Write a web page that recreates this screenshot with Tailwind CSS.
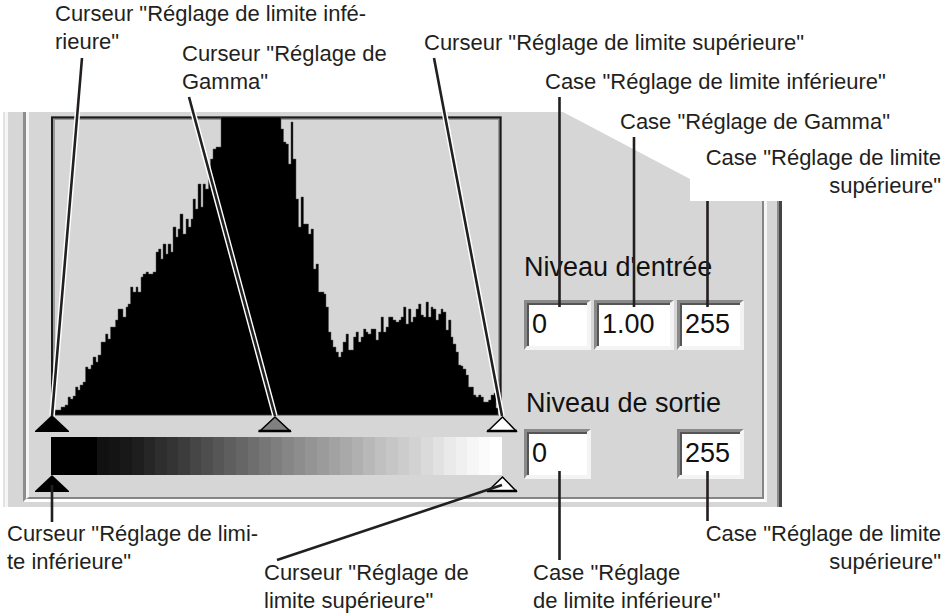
<!DOCTYPE html>
<html lang="fr">
  <head>
    <meta charset="UTF-8" />
    <meta name="viewport" content="width=device-width, initial-scale=1.0" />
    <title>Réglage des niveaux</title>
    <script src="https://cdn.jsdelivr.net/npm/@tailwindcss/browser@4"></script>
  </head>
  <body class="bg-white font-['Liberation_Sans',Arial,sans-serif] text-[#231f20]">
    <main class="relative min-h-screen w-full max-w-[945px] overflow-hidden pt-[112px] pl-[3px]">

      <!-- Dialog panel, cut away at the top right -->
      <section class="flex w-[779px] bg-[#d6d6d6] [clip-path:polygon(0_0,560px_0,687px_67px,687px_89px,100%_89px,100%_100%,0_100%)]">
        <div class="w-[5px] border-l-2 border-[#e2e2e2] bg-[#f5f5f5]"></div>
        <div class="mb-[5px] ml-[15px] w-[744px] border-r-3 border-b-3 border-l-3 border-r-[#f5f5f5] border-b-white border-l-[#8c8c8c]">
          <div class="flex border-r-2 border-b-2 border-l-3 border-r-[#858585] border-b-[#858585] border-l-[#f5f5f5] pt-1 pl-[22px]">

            <div class="w-[451px]">
              <svg class="block h-[299px] w-full" viewBox="51 116 451 299" role="img" aria-label="Histogramme">
                <path fill="none" stroke="#999" stroke-width="4" d="M53 415V118H500V415" />
                <path fill="none" stroke="#1c1c1c" stroke-width="2" d="M52 415V117.500H500.500V415" />
                <path fill="#000" stroke="#555" stroke-width=".5" d="M55 415V410H61V407H65V405H68V397H70.500V399H73V396H75.500V387H78V390H80V385H83V382H85.500V367H88V369H91V365H93V357H96V362H98V355H101V342H105.500V334H108V339H110.500V327H115.500V320H118V309H123V317H126V307H128V304H130.500V287H133V292H136V287H138V292H141V277H143V274H146V272H148.500V274H153V272H156V252H158.500V249H161V259H163V244H166V254H168V244H171V252H173V227H176V237H178V229H180V214H183V234H186V219H188.500V227H191V219H193V199H195.500V209H198V184H201V207H203V184H205.500V189H208.500V178H210.500V159H213V149H216V147H221V117H281V129H283.500V142H286V144H288.500V164H291V122H293V159H296V199H298.500V227H301V197H303.500V224H308.500V234H311V229H313.500V269H316V264H318.500V292H324V294H326V307H328.500V332H331V340H333V347H336V352H338.500V357H341V352H343V342H346V334H348.500V350H353.500V337H356V332H358.500V342H361V337H363.500V329H366V332H368V334H371V329H376V340H378.500V332H381V317H383.500V332H386V327H388.500V317H393V320H396V322H399V320H401V317H403.500V307H406V324H408.500V309H411V322H413V317H416V309H418.500V304H421V315H423.500V317H426V302H428.500V317H431V307H433V309H436V320H438.500V314H441V309H443V312H446V330H448.500V320H451V337H453V344H456V352H458.500V365H461V366H463V369H466V375H468.500V387H473.500V395H476V397H478.500V395H481V397H483.500V402H488.500V400H491V395H494V393H496V408H498V415Z" />
              </svg>

              <!-- Input sliders -->
              <div class="relative h-[22px] border-t border-[#8c8c8c]">
                <svg class="block h-[21px] w-full overflow-visible" viewBox="51 416 451 21" aria-hidden="true">
                  <path fill="#000" d="M52 415L69 431V432H35V431Z" />
                  <path fill="#808080" stroke="#000" stroke-width="1.500" d="M275 417L290 431H260Z" />
                  <path fill="#fff" stroke="#000" stroke-width="1.500" d="M502.500 417L516 431H488Z" />
                  <path stroke="#000" stroke-width="2.500" d="M258.500 431H291M487 431H517" />
                </svg>
                <input type="range" min="0" max="255" value="0" aria-labelledby="c-in-low" class="absolute top-0 left-0 h-full w-1/3 opacity-0" />
                <input type="range" min="0" max="2" step="0.01" value="1" aria-labelledby="c-gamma" class="absolute top-0 left-1/3 h-full w-1/3 opacity-0" />
                <input type="range" min="0" max="255" value="255" aria-labelledby="c-in-high" class="absolute top-0 right-0 h-full w-1/3 opacity-0" />
              </div>

              <div id="ramp" class="flex h-[38px]"></div>

              <!-- Output sliders -->
              <div class="relative h-[22px]">
                <svg class="block h-[22px] w-full overflow-visible" viewBox="51 475 451 22" aria-hidden="true">
                  <path fill="#000" d="M52 475L69 491V492H35V491Z" />
                  <path fill="#fff" stroke="#000" stroke-width="1.500" d="M502.500 477L516 491H488Z" />
                  <path stroke="#000" stroke-width="2.500" d="M487 491H517" />
                </svg>
                <input type="range" min="0" max="255" value="0" aria-labelledby="c-out-low" class="absolute top-0 left-0 h-full w-1/2 opacity-0" />
                <input type="range" min="0" max="255" value="255" aria-labelledby="c-out-high" class="absolute top-0 right-0 h-full w-1/2 opacity-0" />
              </div>
            </div>

            <div class="ml-[22px] pt-[135px] text-[27px] leading-8 text-[#111]">
              <h2 id="in-title">Niveau d'entrée</h2>
              <div class="mt-[17px] flex gap-[3px]" role="group" aria-labelledby="in-title">
                <input type="text" value="0" aria-labelledby="b-in-low" class="h-[50px] w-[67px] border-t-3 border-r-4 border-b-4 border-l-3 border-t-[#8a8a8a] border-r-[#f4f4f4] border-b-[#f4f4f4] border-l-[#8a8a8a] bg-white pl-[5px] shadow-[inset_2px_2px_0_#555]" />
                <input type="text" value="1.00" aria-labelledby="b-gamma" class="h-[50px] w-[80px] border-t-3 border-r-4 border-b-4 border-l-3 border-t-[#8a8a8a] border-r-[#f4f4f4] border-b-[#f4f4f4] border-l-[#8a8a8a] bg-white pl-[5px] shadow-[inset_2px_2px_0_#555]" />
                <input type="text" value="255" aria-labelledby="b-in-high" class="h-[50px] w-[67px] border-t-3 border-r-4 border-b-4 border-l-3 border-t-[#8a8a8a] border-r-[#f4f4f4] border-b-[#f4f4f4] border-l-[#8a8a8a] bg-white pl-[5px] shadow-[inset_2px_2px_0_#555]" />
              </div>
              <h2 id="out-title" class="mt-[37px] pl-[2px]">Niveau de sortie</h2>
              <div class="mt-[10px] flex justify-between" role="group" aria-labelledby="out-title">
                <input type="text" value="0" aria-labelledby="b-out-low" class="h-[50px] w-[67px] border-t-3 border-r-4 border-b-4 border-l-3 border-t-[#8a8a8a] border-r-[#f4f4f4] border-b-[#f4f4f4] border-l-[#8a8a8a] bg-white pl-[5px] shadow-[inset_2px_2px_0_#555]" />
                <input type="text" value="255" aria-labelledby="b-out-high" class="h-[50px] w-[67px] border-t-3 border-r-4 border-b-4 border-l-3 border-t-[#8a8a8a] border-r-[#f4f4f4] border-b-[#f4f4f4] border-l-[#8a8a8a] bg-white pl-[5px] shadow-[inset_2px_2px_0_#555]" />
              </div>
            </div>
          </div>
        </div>
        <div class="ml-auto w-[5px] border-r-3 border-[#444] bg-[#8c8c8c]"></div>
      </section>

      <!-- Leader lines -->
      <svg class="pointer-events-none absolute top-0 left-0 h-[615px] w-[945px]" viewBox="0 0 945 615" fill="none" aria-hidden="true">
        <path stroke="#fff" stroke-width="5.500" d="M77.500 112L52 416M193 112L275 416M444.300 112L502 416" />
        <path stroke="#231f20" stroke-width="2.600" d="M82 58L52 416M189 97L275 416M434 58L502 416M559.500 97V307M634 137V307M707.500 201V307M52 485V522M502 485L277 560M559.500 471V560M707.500 471V521" />
      </svg>

      <!-- Callouts -->
      <div class="text-[22px] leading-7 whitespace-nowrap">
        <p id="c-in-low" class="absolute top-0 left-[55px]">Curseur "Réglage de limite infé-<br />rieure"</p>
        <p id="c-gamma" class="absolute top-[40px] left-[182px]">Curseur "Réglage de<br />Gamma"</p>
        <p id="c-in-high" class="absolute top-[29px] left-[424px]">Curseur "Réglage de limite supérieure"</p>
        <p id="b-in-low" class="absolute top-[68px] left-[545px]">Case "Réglage de limite inférieure"</p>
        <p id="b-gamma" class="absolute top-[108px] left-[620px]">Case "Réglage de Gamma"</p>
        <p id="b-in-high" class="absolute top-[144px] right-[4px] text-right">Case "Réglage de limite<br />supérieure"</p>
        <p id="c-out-low" class="absolute top-[520px] left-[7px]">Curseur "Réglage de limi-<br />te inférieure"</p>
        <p id="c-out-high" class="absolute top-[559px] left-[264px]">Curseur "Réglage de<br />limite supérieure"</p>
        <p id="b-out-low" class="absolute top-[559px] left-[533px]">Case "Réglage<br />de limite inférieure"</p>
        <p id="b-out-high" class="absolute top-[520px] right-[4px] text-right">Case "Réglage de limite<br />supérieure"</p>
      </div>
    </main>

    <script>
      // grey levels of the output ramp, one per band
      const levels = [0, 0, 0, 0, 17, 20, 24, 30, 38, 46, 52, 60, 70, 78, 86, 94, 102, 110, 118, 126, 134, 141, 148, 155, 162, 169, 176, 184, 192, 198, 204, 210, 218, 226, 234, 240, 246, 251, 255];
      const ramp = document.getElementById('ramp');

      levels.forEach((v) => {
        const band = document.createElement('div');
        band.className = 'flex-1';
        band.style.backgroundColor = `rgb(${v}, ${v}, ${v})`;
        ramp.appendChild(band);
      });
    </script>
  </body>
</html>
